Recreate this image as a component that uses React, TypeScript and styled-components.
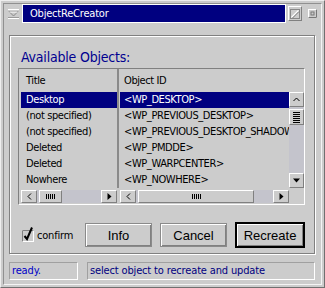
import styled, { createGlobalStyle } from 'styled-components'

const NARROW = `"Liberation Sans Narrow", "DejaVu Sans Condensed", "DejaVu Sans", sans-serif`
const SANS = `"Liberation Sans", Arial, sans-serif`

const GlobalStyle = createGlobalStyle`
    html, body {
        margin: 0;
        padding: 0;
        background: #cccccc;
    }
    #root {
        width: 325px;
        height: 288px;
    }
`

type Row = { title: string; id: string }

const rows: Row[] = [
    { title: 'Desktop', id: '<WP_DESKTOP>' },
    { title: '(not specified)', id: '<WP_PREVIOUS_DESKTOP>' },
    { title: '(not specified)', id: '<WP_PREVIOUS_DESKTOP_SHADOW>' },
    { title: 'Deleted', id: '<WP_PMDDE>' },
    { title: 'Deleted', id: '<WP_WARPCENTER>' },
    { title: 'Nowhere', id: '<WP_NOWHERE>' },
]

function Arrow({ dir, enabled }: { dir: 'up' | 'down' | 'left' | 'right'; enabled?: boolean }) {
    const rot = { up: 0, right: 90, down: 180, left: 270 }[dir]
    return (
        <svg width="9" height="9" viewBox="0 0 9 9" style={{ transform: `rotate(${rot}deg)` }}>
            {enabled ? (
                <polygon points="1,6.5 8,6.5 4.5,2.5" fill="#000" />
            ) : (
                <polyline points="1.5,6 4.5,3 7.5,6" fill="none" stroke="#000" strokeWidth="1" />
            )}
        </svg>
    )
}

function HScrollBar({ thumb }: { thumb: number }) {
    return (
        <HScroll>
            <ScrollBtn $w={16}>
                <Arrow dir="left" />
            </ScrollBtn>
            <HThumb $w={thumb}>
                {[0, 1, 2, 3, 4].map((n) => (
                    <GripV key={n} />
                ))}
            </HThumb>
            <HTrack />
            <ScrollBtn $w={16}>
                <Arrow dir="right" enabled />
            </ScrollBtn>
        </HScroll>
    )
}

export default function App() {
    return (
        <>
            <GlobalStyle />
            <Window>
                <Frame>
                    <TitleRow>
                        <SysMenu>
                            <svg width="11" height="10" viewBox="0 0 11 10">
                                <line x1="0" y1="0.5" x2="11" y2="0.5" stroke="#fff" />
                                <polygon points="1,2.5 10,2.5 5.5,7" fill="#c8c8c8" stroke="#8a8a8a" />
                                <line x1="1.5" y1="3" x2="9.5" y2="3" stroke="#fff" />
                                <line x1="0" y1="8.5" x2="11" y2="8.5" stroke="#9a9a9a" />
                                <line x1="0" y1="9.5" x2="11" y2="9.5" stroke="#fff" />
                            </svg>
                        </SysMenu>
                        <TitleBar>ObjectReCreator</TitleBar>
                        <HideButton>
                            <svg width="10" height="10" viewBox="0 0 10 10">
                                <rect x="0.5" y="0.5" width="9" height="9" fill="none" stroke="#888" />
                                <line x1="1.5" y1="8.5" x2="8.5" y2="1.5" stroke="#fff" strokeWidth="1.4" />
                                <line x1="2.5" y1="9" x2="9" y2="2.5" stroke="#777" />
                            </svg>
                        </HideButton>
                        <MaxButton>
                            <svg width="9" height="9" viewBox="0 0 9 9">
                                <rect x="0.5" y="0.5" width="8" height="8" fill="#ccc" stroke="#fff" />
                                <path d="M8.5 0.5 V8.5 H0.5" fill="none" stroke="#777" />
                                <rect x="3" y="3" width="3" height="3" fill="#ccc" stroke="#777" strokeWidth="1" />
                            </svg>
                        </MaxButton>
                    </TitleRow>

                    <Group>
                        <GroupLabel>Available Objects:</GroupLabel>
                        <ListBox>
                            <HeaderCell>Title</HeaderCell>
                            <Divider />
                            <HeaderCell $pad={4}>Object ID</HeaderCell>
                            <HeaderFill />

                            <Column>
                                {rows.map((r, i) => (
                                    <Cell key={i} $selected={i === 0}>
                                        {r.title}
                                    </Cell>
                                ))}
                            </Column>
                            <Divider />
                            <Column>
                                {rows.map((r, i) => (
                                    <Cell key={i} $selected={i === 0} $pad={4}>
                                        {r.id}
                                    </Cell>
                                ))}
                            </Column>
                            <VScroll>
                                <ScrollBtn $h={15}>
                                    <Arrow dir="up" />
                                </ScrollBtn>
                                <VThumb>
                                    {[0, 1, 2, 3, 4, 5].map((n) => (
                                        <GripH key={n} />
                                    ))}
                                </VThumb>
                                <VTrack />
                                <ScrollBtn $h={15}>
                                    <Arrow dir="down" enabled />
                                </ScrollBtn>
                            </VScroll>

                            <HScrollBar thumb={23} />
                            <ScrollGap />
                            <HScrollBar thumb={116} />
                            <Corner />
                        </ListBox>

                        <ButtonRow>
                            <CheckWrap>
                                <svg width="13" height="17" viewBox="0 0 13 17">
                                    <rect x="0.5" y="4.5" width="11" height="11" fill="#ccc" stroke="#fff" />
                                    <path d="M0.5 15.5 V4.5 H11.5" fill="none" stroke="#808080" />
                                    <path d="M2.5 10 L5 13 L10 1.5" fill="none" stroke="#000" strokeWidth="2" />
                                </svg>
                                <CheckLabel>confirm</CheckLabel>
                            </CheckWrap>
                            <PushButton $w={67}>Info</PushButton>
                            <PushButton $w={67}>Cancel</PushButton>
                            <PushButton $w={70} $default>
                                Recreate
                            </PushButton>
                        </ButtonRow>
                    </Group>

                    <StatusRow>
                        <StatusBox $w={69} $color="#0000c8">
                            ready.
                        </StatusBox>
                        <StatusBox $color="#000080">select object to recreate and update</StatusBox>
                    </StatusRow>
                </Frame>
            </Window>
        </>
    )
}

const Window = styled.div`
    width: 325px;
    height: 288px;
    box-sizing: border-box;
    background: #cccccc;
    border: 1px solid;
    border-color: #eeeeee #707070 #707070 #eeeeee;
    padding: 2px;
`

const Frame = styled.div`
    height: 100%;
    box-sizing: border-box;
    border: 1px solid;
    border-color: #909090 #f4f4f4 #f4f4f4 #909090;
    display: flex;
    flex-direction: column;
`

const TitleRow = styled.div`
    display: flex;
    align-items: center;
    height: 19px;
    padding: 0 4px;
`

const SysMenu = styled.div`
    width: 11px;
    height: 10px;
    display: flex;
    margin-right: 3px;
`

const TitleBar = styled.div`
    flex: 1;
    height: 19px;
    box-sizing: border-box;
    border: 1px solid #fff;
    background: #000080;
    color: #fff;
    font-family: ${NARROW};
    font-size: 11px;
    letter-spacing: -0.2px;
    line-height: 17px;
    padding-left: 7px;
`

const HideButton = styled.div`
    width: 14px;
    height: 15px;
    margin-left: 2px;
    box-sizing: border-box;
    border: 1px solid;
    border-color: #fff #808080 #808080 #fff;
    display: flex;
    align-items: center;
    justify-content: center;
`

const MaxButton = styled.div`
    width: 9px;
    height: 9px;
    margin-left: 6px;
    display: flex;
`

const Group = styled.div`
    margin: 12px 6px 0 5px;
    border: 1px solid #808080;
    box-shadow: inset 1px 1px 0 #fff, 1px 1px 0 #fff;
    padding: 12px 0 5px 8px;
`

const GroupLabel = styled.div`
    font-family: ${NARROW};
    font-size: 14px;
    letter-spacing: -0.2px;
    line-height: 18px;
    height: 18px;
    color: #000090;
    padding-left: 3px;
    margin-bottom: 2px;
`

const ListBox = styled.div`
    width: 287px;
    height: 137px;
    box-sizing: border-box;
    border: 1px solid;
    border-color: #808080 #fff #fff #808080;
    padding: 0 0 1px 2px;
    display: grid;
    grid-template-columns: 96px 3px 169px 15px;
    grid-template-rows: 23px 96px 15px;
    font-family: ${NARROW};
    font-size: 11px;
    letter-spacing: -0.4px;
`

const HeaderCell = styled.div<{ $pad?: number }>`
    padding-left: ${({ $pad }) => $pad ?? 5}px;
    line-height: 23px;
    color: #000;
`

const HeaderFill = styled.div``

const Divider = styled.div`
    border-left: 2px solid #8a8a8a;
`

const Column = styled.div`
    display: flex;
    flex-direction: column;
    overflow: hidden;
`

const Cell = styled.div<{ $selected?: boolean; $pad?: number }>`
    height: 16px;
    line-height: 16px;
    padding-left: ${({ $pad }) => $pad ?? 5}px;
    white-space: nowrap;
    overflow: hidden;
    background: ${({ $selected }) => ($selected ? '#000080' : 'transparent')};
    color: ${({ $selected }) => ($selected ? '#fff' : '#000')};
`

const VScroll = styled.div`
    display: flex;
    flex-direction: column;
    background: #c4c4cc;
`

const ScrollBtn = styled.div<{ $w?: number; $h?: number }>`
    box-sizing: border-box;
    width: ${({ $w }) => ($w ? `${$w}px` : 'auto')};
    height: ${({ $h }) => ($h ? `${$h}px` : 'auto')};
    flex-shrink: 0;
    background: #cccccc;
    border: 1px solid;
    border-color: #fff #808080 #808080 #fff;
    display: flex;
    align-items: center;
    justify-content: center;
`

const VThumb = styled.div`
    height: 16px;
    margin-top: 2px;
    box-sizing: border-box;
    background: #cccccc;
    border: 1px solid;
    border-color: #fff #808080 #808080 #fff;
    display: flex;
    flex-direction: column;
    align-items: center;
    justify-content: center;
    gap: 1px;
`

const GripH = styled.div`
    width: 7px;
    height: 1px;
    background: #000;
`

const VTrack = styled.div`
    flex: 1;
`

const HScroll = styled.div`
    display: flex;
    height: 13px;
    align-self: end;
    background: #c4c4cc;
`

const HThumb = styled.div<{ $w: number }>`
    width: ${({ $w }) => $w}px;
    margin-left: 2px;
    box-sizing: border-box;
    background: #cccccc;
    border: 1px solid;
    border-color: #fff #808080 #808080 #fff;
    display: flex;
    align-items: center;
    justify-content: center;
    gap: 1px;
`

const GripV = styled.div`
    width: 1px;
    height: 5px;
    background: #000;
`

const HTrack = styled.div`
    flex: 1;
`

const ScrollGap = styled.div``

const Corner = styled.div`
    background: #cccccc;
`

const ButtonRow = styled.div`
    display: flex;
    align-items: center;
    height: 26px;
    margin-top: 17px;
    padding-left: 4px;
`

const CheckWrap = styled.div`
    width: 63px;
    display: flex;
    align-items: flex-end;
    gap: 2px;
    padding-bottom: 2px;
`

const CheckLabel = styled.span`
    font-family: ${NARROW};
    font-size: 11px;
    letter-spacing: -0.2px;
    line-height: 14px;
    color: #000;
`

const PushButton = styled.button<{ $w: number; $default?: boolean }>`
    width: ${({ $w }) => $w}px;
    height: ${({ $default }) => ($default ? '26px' : '24px')};
    margin-right: 8px;
    box-sizing: border-box;
    background: #cccccc;
    border: ${({ $default }) => ($default ? '2px solid #000' : '1px solid #8a8a8a')};
    box-shadow: inset 1px 1px 0 #fff, inset -1px -1px 0 #808080;
    font-family: ${SANS};
    font-size: 13px;
    color: #000;
    padding: 0;
    &:last-child {
        margin-right: 0;
    }
`

const StatusRow = styled.div`
    display: flex;
    gap: 9px;
    margin: 8px 6px 0 5px;
    height: 18px;
`

const StatusBox = styled.div<{ $w?: number; $color: string }>`
    width: ${({ $w }) => ($w ? `${$w}px` : 'auto')};
    flex: ${({ $w }) => ($w ? '0 0 auto' : '1')};
    box-sizing: border-box;
    border: 1px solid;
    border-color: #a0a0a0 #fff #fff #a0a0a0;
    color: ${({ $color }) => $color};
    font-family: ${NARROW};
    font-size: 11px;
    letter-spacing: -0.15px;
    line-height: 16px;
    padding-left: 2px;
    white-space: nowrap;
    overflow: hidden;
`
